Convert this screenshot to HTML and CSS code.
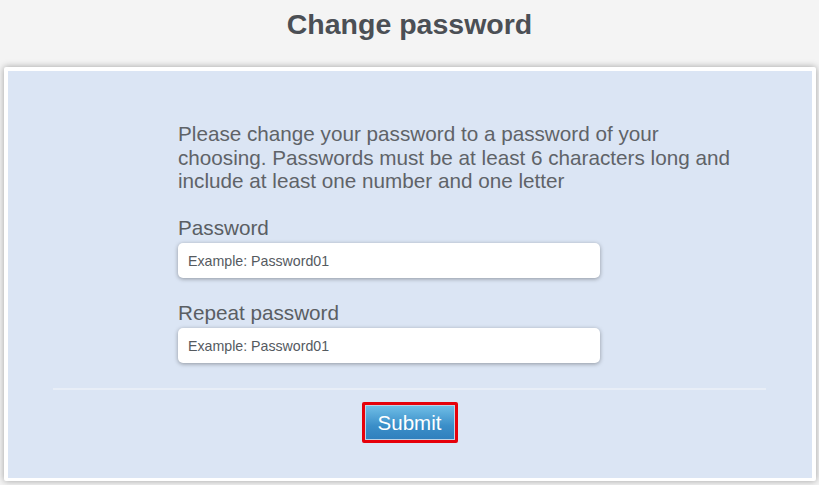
FILE: index.html
```html
<!DOCTYPE html>
<html>
<head>
<meta charset="utf-8">
<link rel="stylesheet" href="styles.css">
</head>
<body>
<h1 class="title">Change password</h1>
<div class="card">
  <div class="card-inner">
    <form class="form">
      <p class="intro">Please change your password to a password of your choosing. Passwords must be at least 6 characters long and include at least one number and one letter</p>
      <label class="label">Password</label>
      <input class="input" type="password" placeholder="Example: Password01">
      <label class="label label-second">Repeat password</label>
      <input class="input" type="password" placeholder="Example: Password01">
    </form>
    <div class="divider"></div>
    <div class="actions">
      <button class="submit" type="button">Submit</button>
    </div>
  </div>
</div>
</body>
</html>
```
FILE: styles.css
```css
html, body {
  margin: 0;
  padding: 0;
}
body {
  background: #f4f4f4;
  font-family: "Liberation Sans", Arial, sans-serif;
  width: 819px;
  height: 485px;
  overflow: hidden;
}
.title {
  margin: 0;
  height: 48px;
  line-height: 48px;
  text-align: center;
  font-size: 28.5px;
  font-weight: bold;
  color: #4b4f55;
}
.card {
  margin: 19px 3px 0 4px;
  background: #ffffff;
  padding: 4px 4px 3px 4px;
  box-shadow: 0 0 7px rgba(0, 0, 0, 0.35);
  border-radius: 2px;
}
.card-inner {
  background: #dbe5f4;
  padding: 51px 0 35px 0;
}
.form {
  margin-left: 170px;
  width: 565px;
  display: flex;
  flex-direction: column;
  align-items: flex-start;
}
.intro {
  margin: 0 0 23px 0;
  font-size: 20.7px;
  line-height: 23.7px;
  color: #5f6368;
}
.label {
  font-size: 20.7px;
  line-height: 23px;
  color: #5a5e63;
  margin-bottom: 4px;
}
.label-second {
  margin-top: 23px;
}
.input {
  box-sizing: border-box;
  width: 422px;
  height: 35px;
  border: none;
  border-radius: 5px;
  background: #ffffff;
  box-shadow: 0 1px 4px rgba(0, 0, 0, 0.35);
  padding: 0 10px;
  font-family: "Liberation Sans", Arial, sans-serif;
  font-size: 14.2px;
  color: #444;
  outline: none;
}
.input::placeholder {
  color: #555a5f;
}
.divider {
  margin: 25px 46px 0 45px;
  height: 2px;
  background: #e8eef7;
}
.actions {
  display: flex;
  justify-content: center;
  margin-top: 12px;
}
.submit {
  box-sizing: border-box;
  width: 96px;
  height: 41px;
  margin-left: -1px;
  border: 3px solid #e6000a;
  border-radius: 2px;
  padding: 0;
  background: linear-gradient(#72c0e8, #3a8ec8 60%, #2f7fbd);
  box-shadow: inset 0 0 0 1px #bcd3e6;
  color: #ffffff;
  font-family: "Liberation Sans", Arial, sans-serif;
  font-size: 20.5px;
  line-height: 33px;
}
```
